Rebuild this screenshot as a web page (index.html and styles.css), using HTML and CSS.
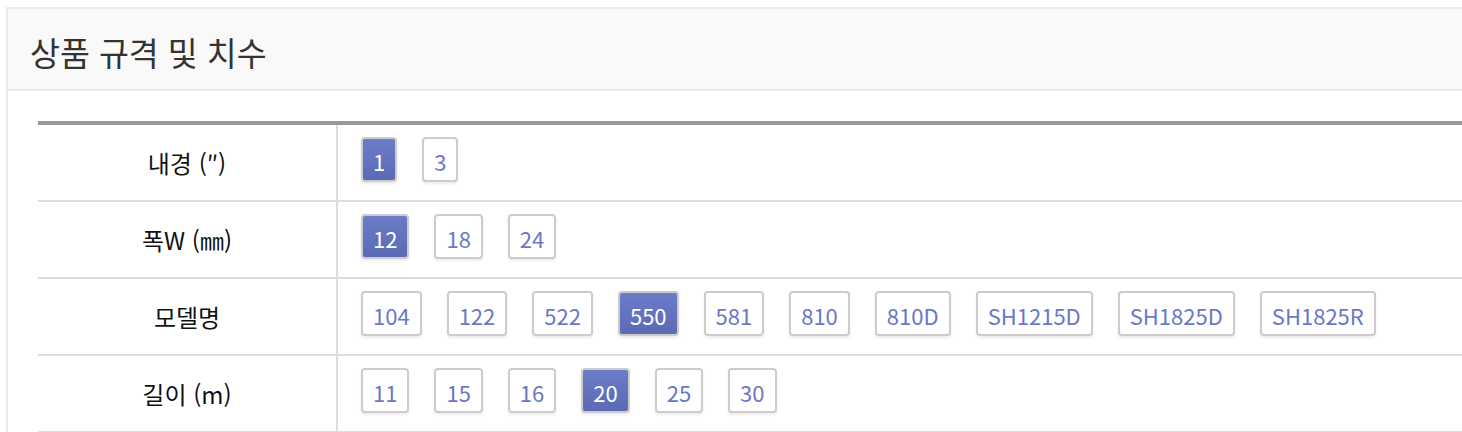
FILE: index.html
```html
<!DOCTYPE html>
<html lang="ko">
<head>
<meta charset="utf-8">
<title>상품 규격 및 치수</title>
<link rel="stylesheet" href="styles.css">
</head>
<body>
<section class="panel">
  <header class="panel-head">
    <h2 class="panel-title">상품 규격 및 치수</h2>
  </header>
  <div class="panel-body">
    <table class="spec">
      <tbody>
        <tr>
          <th>내경 (″)</th>
          <td><div class="opts"><span class="opt on">1</span><span class="opt">3</span></div></td>
        </tr>
        <tr>
          <th>폭W (㎜)</th>
          <td><div class="opts"><span class="opt on">12</span><span class="opt">18</span><span class="opt">24</span></div></td>
        </tr>
        <tr>
          <th>모델명</th>
          <td><div class="opts"><span class="opt">104</span><span class="opt">122</span><span class="opt">522</span><span class="opt on">550</span><span class="opt">581</span><span class="opt">810</span><span class="opt">810D</span><span class="opt">SH1215D</span><span class="opt">SH1825D</span><span class="opt">SH1825R</span></div></td>
        </tr>
        <tr>
          <th>길이 (m)</th>
          <td><div class="opts"><span class="opt">11</span><span class="opt">15</span><span class="opt">16</span><span class="opt on">20</span><span class="opt">25</span><span class="opt">30</span></div></td>
        </tr>
      </tbody>
    </table>
  </div>
</section>
</body>
</html>
```
FILE: styles.css
```css
html, body {
  margin: 0;
  padding: 0;
  background: #fff;
  overflow: hidden;
}
body {
  font-family: "Noto Sans CJK KR", "Noto Sans", sans-serif;
  color: #222;
}
.panel {
  margin: 7px 0 0 6px;
  width: 1500px;
  border: 2px solid #ebebeb;
  border-right: none;
  box-sizing: border-box;
}
.panel-head {
  box-sizing: border-box;
  height: 82px;
  background: #f9f9f9;
  border-bottom: 2px solid #ebebeb;
  display: flex;
  align-items: center;
  padding: 4px 0 0 22px;
}
.panel-title {
  margin: 0;
  font-size: 32.5px;
  font-weight: 400;
  color: #333;
}
.panel-body {
  padding: 30px 0 0 30px;
}
.spec {
  width: 100%;
  border-collapse: collapse;
  border-top: 4px solid #999;
}
.spec tr {
  border-bottom: 2px solid #ddd;
}
.spec th {
  width: 298px;
  border-right: 2px solid #ddd;
  font-weight: 400;
  font-size: 24px;
  color: #111;
  text-align: center;
  vertical-align: middle;
  padding: 0;
}
.spec td {
  padding: 12px 0 18px 23px;
  height: 45px;
}
.opts {
  display: flex;
  gap: 25px;
}
.opt {
  box-sizing: border-box;
  height: 45px;
  padding: 2px 10px 0 10px;
  display: flex;
  align-items: center;
  border: 2px solid #ccc;
  border-radius: 4px;
  background: #fff;
  color: #6a78c6;
  font-size: 22px;
  box-shadow: 0 2px 3px rgba(0,0,0,0.08);
}
.opt.on {
  background: linear-gradient(#6b7cc8, #5b6ab4);
  color: #fff;
}
```
